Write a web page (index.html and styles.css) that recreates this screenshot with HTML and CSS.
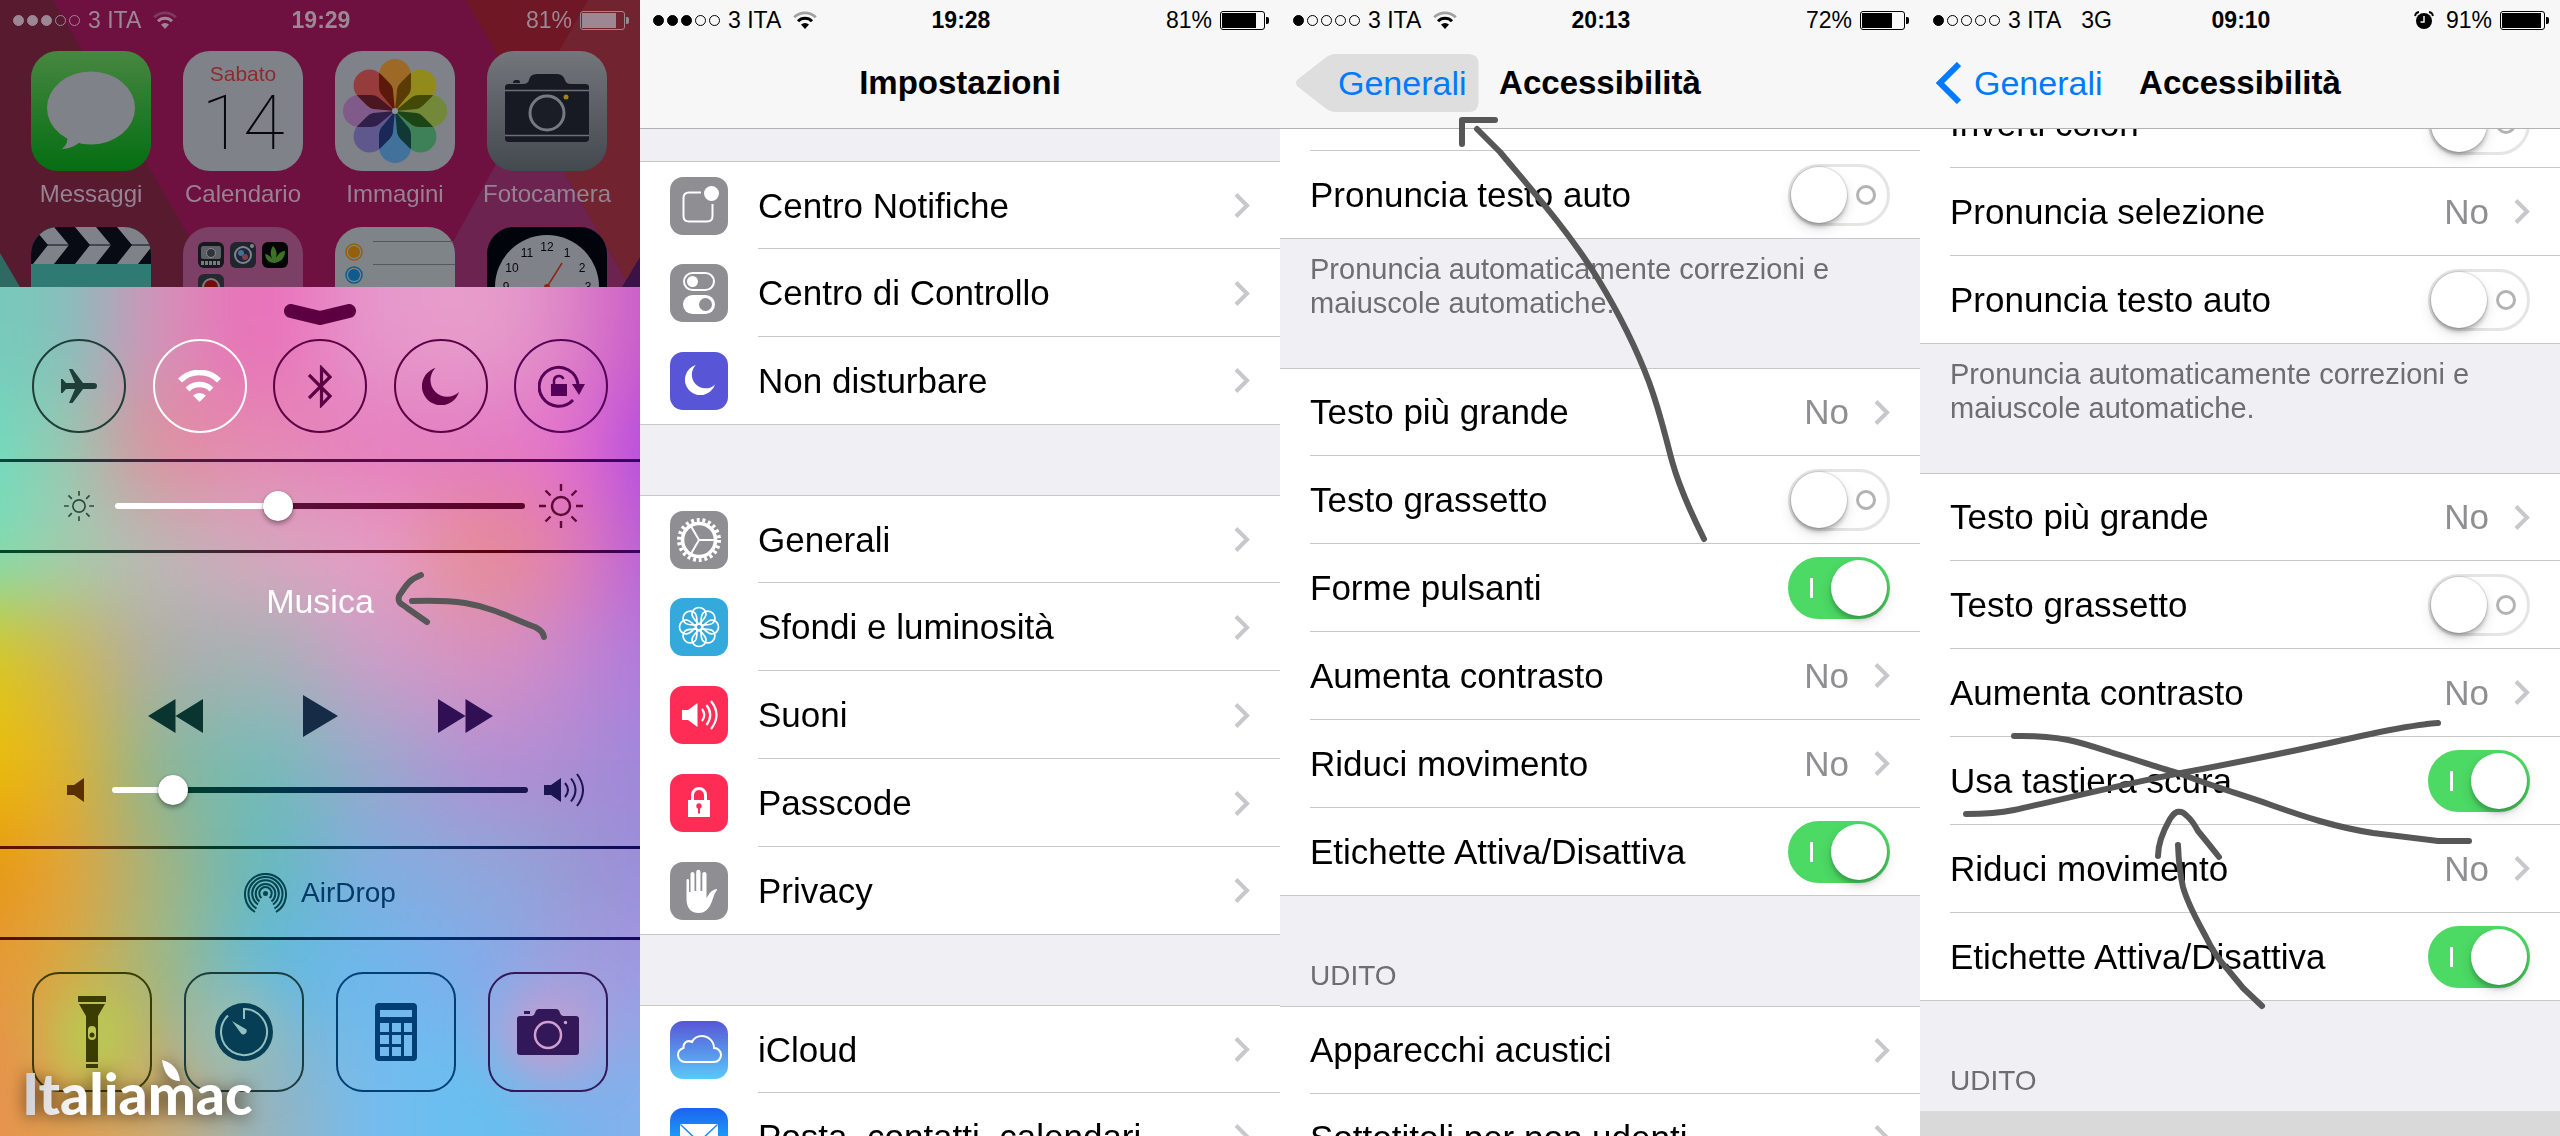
FILE: index.html
```html
<!DOCTYPE html>
<html lang="it">
<head>
    <meta charset="UTF-8" />
    <meta name="viewport" content="width=device-width, initial-scale=1" />
    <title>iOS 7.1 - Italiamac</title>
    <link rel="stylesheet" href="styles.css">
</head>
<body>
    <!-- Shared icons -->
    <svg class="sprite" aria-hidden="true">
        <symbol id="wifi" viewBox="0 0 24 18">
            <path d="M12 18 L8 13.600 A6 6 0 0 1 16 13.600 Z" fill="currentColor"/>
            <path d="M5 10.300 A9.800 9.800 0 0 1 19 10.300" fill="none" stroke="currentColor" stroke-width="3"/>
            <path d="M1.200 6.200 A15.400 15.400 0 0 1 22.800 6.200" fill="none" stroke="currentColor" stroke-width="2.800" opacity=".35"/>
        </symbol>
        <symbol id="chevron" viewBox="0 0 16 25">
            <path d="M2 1.500 L13 12.500 L2 23.500" fill="none" stroke="currentColor" stroke-width="4"/>
        </symbol>
        <symbol id="moon" viewBox="0 0 37 37">
            <path d="M13.500 0 A19 19 0 1 0 37 24 A16.500 16.500 0 0 1 13.500 0 Z" fill="currentColor"/>
        </symbol>
        <symbol id="speaker" viewBox="0 0 17 24">
            <path d="M0 7 H7 L17 0 V24 L7 17 H0 Z" fill="currentColor"/>
        </symbol>
        <symbol id="speaker-loud" viewBox="0 0 40 34">
            <path d="M0 12 H7 L17 5 V29 L7 22 H0 Z" fill="currentColor"/>
            <g fill="none" stroke="currentColor" stroke-width="2">
                <path d="M21 10 Q27 17 21 24"/>
                <path d="M27 5.500 Q36 17 27 28.500"/>
                <path d="M33 1 Q45 17 33 33"/>
            </g>
        </symbol>
        <symbol id="sun" viewBox="0 0 44 44">
            <g fill="none" stroke="currentColor" stroke-width="2.400">
                <circle cx="22" cy="22" r="9"/>
                <path d="M22 0 V7 M22 37 V44 M0 22 H7 M37 22 H44 M6.500 6.500 L11.500 11.500 M32.500 32.500 L37.500 37.500 M6.500 37.500 L11.500 32.500 M32.500 11.500 L37.500 6.500"/>
            </g>
        </symbol>
    </svg>

    <div class="phones">
        <!-- Control Center -->
        <section class="phone">
            <div class="home">
                <svg class="wallpaper" viewBox="0 0 640 287" preserveAspectRatio="none" aria-hidden="true">
                    <rect width="640" height="287" fill="#6f1140"/>
                    <path d="M0 0 H53 L218 287 H0 Z" fill="#581a2f"/>
                    <path d="M0 253 L20 287 H0 Z" fill="#2f6a62"/>
                    <path d="M466 0 H588 L530 110 Z" fill="#701725"/>
                    <path d="M588 0 H640 V287 H630 L527 108 Z" fill="#71232f"/>
                    <path d="M527 108 L428 287 H630 Z" fill="#6c2350"/>
                    <path d="M640 257 L622 287 H640 Z" fill="#3a1248"/>
                </svg>
                <div class="status dimmed">
                    <div class="status-left">
                        <span class="dots"><i class="on"></i><i class="on"></i><i class="on"></i><i></i><i></i></span>
                        <span>3 ITA</span>
                        <svg class="wifi"><use href="#wifi"/></svg>
                    </div>
                    <b>19:29</b>
                    <div class="status-right">
                        <span>81%</span>
                        <span class="battery"><span style="width: 83%"></span></span>
                    </div>
                </div>
                <div class="apps">
                    <a class="app" href="#">
                        <svg viewBox="0 0 120 120">
                            <defs><linearGradient id="msg" x2="0" y2="1"><stop stop-color="#478740"/><stop offset="1" stop-color="#046e12"/></linearGradient></defs>
                            <rect width="120" height="120" rx="27" fill="url(#msg)"/>
                            <ellipse cx="60" cy="57" rx="44" ry="36.500" fill="#7f8389"/>
                            <path d="M36 84 Q38 92 31 98 Q41 98 49 91 Z" fill="#7f8389"/>
                        </svg>
                        <span>Messaggi</span>
                    </a>
                    <a class="app" href="#">
                        <span class="calendar"><span class="day">Sabato</span><span class="date">14</span></span>
                        <span>Calendario</span>
                    </a>
                    <a class="app" href="#">
                        <svg class="photos" viewBox="0 0 120 120">
                            <defs><path id="petal" d="M0 0 L-14 -17 Q-16 -20 -16 -24 V-36 A16 16 0 0 1 16 -36 V-24 Q16 -20 14 -17 Z"/></defs>
                            <rect width="120" height="120" rx="27" fill="#7f8389"/>
                            <g transform="translate(60 60)">
                                <use href="#petal" fill="#9c6a26"/>
                                <use href="#petal" fill="#938a1c" transform="rotate(45)"/>
                                <use href="#petal" fill="#738838" transform="rotate(90)"/>
                                <use href="#petal" fill="#3e8058" transform="rotate(135)"/>
                                <use href="#petal" fill="#42729c" transform="rotate(180)"/>
                                <use href="#petal" fill="#5f588c" transform="rotate(225)"/>
                                <use href="#petal" fill="#805a88" transform="rotate(270)"/>
                                <use href="#petal" fill="#963c3c" transform="rotate(315)"/>
                            </g>
                            <circle cx="60" cy="60" r="3" fill="#8f9398"/>
                        </svg>
                        <span>Immagini</span>
                    </a>
                    <a class="app" href="#">
                        <svg viewBox="0 0 120 120">
                            <defs><linearGradient id="cam" x2="0" y2="1"><stop stop-color="#73767b"/><stop offset="1" stop-color="#444950"/></linearGradient></defs>
                            <rect width="120" height="120" rx="27" fill="url(#cam)"/>
                            <path d="M18 36 Q18 33 22 33 H36 Q41 33 42 29 Q43 23 50 23 H70 Q76 23 78 29 Q79 33 84 33 H98 Q102 33 102 36 V88 Q102 91 98 91 H22 Q18 91 18 88 Z M26 32 Q26 29 29 29 H31 Q33 29 33 32 Z" fill="#171a22"/>
                            <path d="M18 39.500 H102 M18 84.500 H102" stroke="#6c7076" stroke-width="1.500"/>
                            <circle cx="60" cy="62" r="17" fill="#1a1d26" stroke="#757a80" stroke-width="3"/>
                            <circle cx="79" cy="46" r="2.500" fill="#a08510"/>
                        </svg>
                        <span>Fotocamera</span>
                    </a>
                    <a class="app" href="#" aria-label="iMovie">
                        <svg viewBox="0 0 120 120">
                            <defs><clipPath id="round"><rect width="120" height="120" rx="27"/></clipPath></defs>
                            <g clip-path="url(#round)">
                                <rect width="120" height="120" fill="#2f7a72"/>
                                <rect width="120" height="37" fill="#080b14"/>
                                <path d="M-39 0 h21 l15 18 l-15 19 h-21 l15 -19 Z M2 0 h21 l15 18 l-15 19 h-21 l15 -19 Z M44 0 h21 l15 18 l-15 19 h-21 l15 -19 Z M86 0 h21 l15 18 l-15 19 h-21 l15 -19 Z" fill="#7f8389"/>
                                <path d="M0 18 H120" stroke="#080b14"/>
                            </g>
                        </svg>
                    </a>
                    <a class="app" href="#" aria-label="Cartella Foto">
                        <svg viewBox="0 0 120 120">
                            <rect width="120" height="120" rx="27" fill="#7c3f66"/>
                            <rect x="15" y="15" width="26" height="26" rx="6" fill="#15181d"/>
                            <rect x="18" y="19" width="20" height="13" rx="2" fill="#5c6066"/>
                            <circle cx="28" cy="26" r="4.500" fill="#30343a" stroke="#85898e"/>
                            <path d="M18 36 H38" stroke="#777b80" stroke-width="4" stroke-dasharray="3 1"/>
                            <rect x="47" y="15" width="26" height="26" rx="6" fill="#20252e"/>
                            <circle cx="60" cy="28" r="8" fill="#20253f" stroke="#80848a" stroke-width="2"/>
                            <circle cx="58" cy="26" r="3" fill="#457090"/>
                            <circle cx="62" cy="30" r="3" fill="#80404a"/>
                            <circle cx="69" cy="19" r="2" fill="#80848a"/>
                            <rect x="79" y="15" width="26" height="26" rx="6" fill="#030604"/>
                            <path d="M92 36 Q83 36 82 27 Q87 28 89 32 Q86 24 90 19 Q95 24 93 31 Q97 24 102 24 Q102 34 92 36 Z" fill="#3f7028"/>
                            <rect x="15" y="47" width="26" height="26" rx="6" fill="#24282f"/>
                            <circle cx="28" cy="60" r="8" fill="#750c0c" stroke="#777b80" stroke-width="2"/>
                        </svg>
                    </a>
                    <a class="app" href="#" aria-label="Promemoria">
                        <svg viewBox="0 0 120 120">
                            <rect width="120" height="120" rx="27" fill="#7f8489"/>
                            <path d="M38 14.500 H118 M38 37.500 H120" stroke="#54585e"/>
                            <g stroke-width="1.500" fill="none">
                                <circle cx="19" cy="25" r="8" stroke="#94600c"/>
                                <circle cx="19" cy="48" r="8" stroke="#0f5c8c"/>
                            </g>
                            <circle cx="19" cy="25" r="6" fill="#94600c"/>
                            <circle cx="19" cy="48" r="6" fill="#0f5c8c"/>
                        </svg>
                    </a>
                    <a class="app" href="#" aria-label="Orologio">
                        <svg class="clock" viewBox="0 0 120 120">
                            <rect width="120" height="120" rx="27" fill="#02040b"/>
                            <circle cx="60" cy="60" r="52" fill="#7f8389"/>
                            <g text-anchor="middle">
                                <text x="60" y="24">12</text>
                                <text x="80" y="30">1</text>
                                <text x="95" y="45">2</text>
                                <text x="101" y="64">3</text>
                                <text x="19" y="64">9</text>
                                <text x="25" y="45">10</text>
                                <text x="40" y="30">11</text>
                            </g>
                            <path d="M60 60 L75 36" stroke="#8c2418" stroke-width="1.500"/>
                            <circle cx="60" cy="60" r="3" fill="#8c2418"/>
                        </svg>
                    </a>
                </div>
            </div>

            <div class="control-center">
                <svg class="backdrop" viewBox="0 0 640 848" preserveAspectRatio="none" aria-hidden="true">
                    <defs>
                        <filter id="soft" x="-20%" y="-20%" width="140%" height="140%" color-interpolation-filters="sRGB"><feGaussianBlur stdDeviation="42"/></filter>
                        <filter id="glow" x="-100%" y="-100%" width="300%" height="300%" color-interpolation-filters="sRGB"><feGaussianBlur stdDeviation="26"/></filter>
                    </defs>
                    <g filter="url(#soft)">
                        <path d="M-160 -160 H20 V106 H-160 Z" fill="#76ccba"/>
                        <path d="M20 -160 H110 V106 H20 Z" fill="#80c2bc"/>
                        <path d="M110 -160 H210 V106 H110 Z" fill="#d890b8"/>
                        <path d="M210 -160 H320 V106 H210 Z" fill="#ea6eb9"/>
                        <path d="M320 -160 H430 V106 H320 Z" fill="#e698cc"/>
                        <path d="M430 -160 H540 V106 H430 Z" fill="#e79ecb"/>
                        <path d="M540 -160 H620 V106 H540 Z" fill="#dc80c4"/>
                        <path d="M620 -160 H800 V106 H620 Z" fill="#c452cc"/>

                        <path d="M-160 106 H20 V212 H-160 Z" fill="#66dfc2"/>
                        <path d="M20 106 H110 V212 H20 Z" fill="#96ccb0"/>
                        <path d="M110 106 H210 V212 H110 Z" fill="#e48c9c"/>
                        <path d="M210 106 H320 V212 H210 Z" fill="#e58ab4"/>
                        <path d="M320 106 H430 V212 H320 Z" fill="#e67ebf"/>
                        <path d="M430 106 H540 V212 H430 Z" fill="#e47cc4"/>
                        <path d="M540 106 H620 V212 H540 Z" fill="#e66cd0"/>
                        <path d="M620 106 H800 V212 H620 Z" fill="#a644e4"/>

                        <path d="M-160 212 H20 V318 H-160 Z" fill="#74e0b8"/>
                        <path d="M20 212 H110 V318 H20 Z" fill="#a0ceb0"/>
                        <path d="M110 212 H210 V318 H110 Z" fill="#bcb8b6"/>
                        <path d="M210 212 H320 V318 H210 Z" fill="#d8a6be"/>
                        <path d="M320 212 H430 V318 H320 Z" fill="#e79cc4"/>
                        <path d="M430 212 H540 V318 H430 Z" fill="#e68c90"/>
                        <path d="M540 212 H620 V318 H540 Z" fill="#e27cb8"/>
                        <path d="M620 212 H800 V318 H620 Z" fill="#b058e0"/>

                        <path d="M-160 318 H20 V424 H-160 Z" fill="#dccc10"/>
                        <path d="M20 318 H110 V424 H20 Z" fill="#d0b650"/>
                        <path d="M110 318 H210 V424 H110 Z" fill="#acacaa"/>
                        <path d="M210 318 H320 V424 H210 Z" fill="#a4b2b4"/>
                        <path d="M320 318 H430 V424 H320 Z" fill="#cc9cc8"/>
                        <path d="M430 318 H540 V424 H430 Z" fill="#d890c0"/>
                        <path d="M540 318 H620 V424 H540 Z" fill="#c284d2"/>
                        <path d="M620 318 H800 V424 H620 Z" fill="#a878dc"/>

                        <path d="M-160 424 H20 V530 H-160 Z" fill="#ecc000"/>
                        <path d="M20 424 H110 V530 H20 Z" fill="#e4b228"/>
                        <path d="M110 424 H210 V530 H110 Z" fill="#86b69c"/>
                        <path d="M210 424 H320 V530 H210 Z" fill="#74bcb8"/>
                        <path d="M320 424 H430 V530 H320 Z" fill="#9aa8cc"/>
                        <path d="M430 424 H540 V530 H430 Z" fill="#b48ed4"/>
                        <path d="M540 424 H620 V530 H540 Z" fill="#aa8cd2"/>
                        <path d="M620 424 H800 V530 H620 Z" fill="#9c86de"/>

                        <path d="M-160 530 H20 V636 H-160 Z" fill="#e69408"/>
                        <path d="M20 530 H110 V636 H20 Z" fill="#e8a238"/>
                        <path d="M110 530 H210 V636 H110 Z" fill="#a4b480"/>
                        <path d="M210 530 H320 V636 H210 Z" fill="#62bac0"/>
                        <path d="M320 530 H430 V636 H320 Z" fill="#82aee2"/>
                        <path d="M430 530 H540 V636 H430 Z" fill="#8ea8da"/>
                        <path d="M540 530 H620 V636 H540 Z" fill="#9898d2"/>
                        <path d="M620 530 H800 V636 H620 Z" fill="#9c8cdc"/>

                        <path d="M-160 636 H20 V742 H-160 Z" fill="#e8943c"/>
                        <path d="M20 636 H110 V742 H20 Z" fill="#daaa40"/>
                        <path d="M110 636 H210 V742 H110 Z" fill="#9eba84"/>
                        <path d="M210 636 H320 V742 H210 Z" fill="#64bbe0"/>
                        <path d="M320 636 H430 V742 H320 Z" fill="#6cb8ee"/>
                        <path d="M430 636 H540 V742 H430 Z" fill="#84acec"/>
                        <path d="M540 636 H620 V742 H540 Z" fill="#a89cdc"/>
                        <path d="M620 636 H800 V742 H620 Z" fill="#9c9ae4"/>

                        <path d="M-160 742 H20 V1008 H-160 Z" fill="#e8904c"/>
                        <path d="M20 742 H110 V1008 H20 Z" fill="#e09e50"/>
                        <path d="M110 742 H210 V1008 H110 Z" fill="#ccaa70"/>
                        <path d="M210 742 H320 V1008 H210 Z" fill="#94b4c0"/>
                        <path d="M320 742 H430 V1008 H320 Z" fill="#74bcf0"/>
                        <path d="M430 742 H540 V1008 H430 Z" fill="#66c0f0"/>
                        <path d="M540 742 H620 V1008 H540 Z" fill="#7cb2ec"/>
                        <path d="M620 742 H800 V1008 H620 Z" fill="#88b0ec"/>
                    </g>
                    <ellipse cx="94" cy="750" rx="38" ry="48" fill="#b4cf50" filter="url(#glow)"/>
                    <ellipse cx="548" cy="746" rx="46" ry="42" fill="#cc9acc" filter="url(#glow)"/>
                    <ellipse cx="236" cy="745" rx="36" ry="40" fill="#9cc0b0" filter="url(#glow)"/>
                </svg>

                <div class="toggles-section">
                    <svg class="grabber" viewBox="0 0 72 21" aria-hidden="true"><path d="M7 7 L36 14 L65 7" fill="none" stroke="#5c0042" stroke-width="14" stroke-linecap="round"/></svg>
                    <div class="toggles">
                        <button class="toggle teal" aria-label="Uso in aereo">
                            <svg width="36" height="34" viewBox="0 0 36 34"><path d="M14 14 L8 0 H11.500 L22 14 H33 A3 3 0 0 1 33 20 H22 L11.500 34 H8 L14 20 H5 L1.500 24 H0 V10 H1.500 L5 14 Z" fill="currentColor"/></svg>
                        </button>
                        <button class="toggle active" aria-label="Wi-Fi">
                            <svg width="43" height="32" viewBox="0 0 43 32"><path d="M21.500 32 L15 25.500 A9.500 9.500 0 0 1 28 25.500 Z" fill="currentColor"/><path d="M9.500 19.500 A17 17 0 0 1 33.500 19.500 M2 10.500 A27.500 27.500 0 0 1 41 10.500" fill="none" stroke="currentColor" stroke-width="5.500"/></svg>
                        </button>
                        <button class="toggle plum" aria-label="Bluetooth">
                            <svg width="24" height="43" viewBox="0 0 24 43"><path d="M1 10 L22 31 L13.500 40 V3 L22 12 L1 33" fill="none" stroke="currentColor" stroke-width="3.200"/></svg>
                        </button>
                        <button class="toggle plum" aria-label="Non disturbare">
                            <svg width="37" height="37"><use href="#moon"/></svg>
                        </button>
                        <button class="toggle violet" aria-label="Blocco rotazione">
                            <svg width="47" height="43" viewBox="0 0 47 43"><path d="M35 35 A19.500 19.500 0 1 1 40 19" fill="none" stroke="currentColor" stroke-width="3"/><path d="M34 19 H47 L41 30 Z" fill="currentColor"/><path d="M13 19 H29 V31 H13 Z" fill="currentColor"/><path d="M16 20 V15 A5 5 0 0 1 25.500 14" fill="none" stroke="currentColor" stroke-width="2.500"/></svg>
                        </button>
                    </div>
                </div>
                <hr class="rule rule-1">
                <div class="brightness">
                    <svg class="sun-small"><use href="#sun"/></svg>
                    <input class="slider" type="range" value="39" aria-label="Luminosità" style="--value: 39%">
                    <svg class="sun-large"><use href="#sun"/></svg>
                </div>
                <hr class="rule rule-2">
                <div class="media">
                    <span class="track">Musica</span>
                    <div class="transport">
                        <button class="forest" aria-label="Indietro"><svg width="55" height="34" viewBox="0 0 55 34"><path d="M0 17 L27.500 0 V34 Z M27.500 17 L55 0 V34 Z" fill="currentColor"/></svg></button>
                        <button class="navy" aria-label="Riproduci"><svg width="35" height="42" viewBox="0 0 35 42"><path d="M0 0 L35 21 L0 42 Z" fill="currentColor"/></svg></button>
                        <button class="indigo" aria-label="Avanti"><svg width="55" height="34" viewBox="0 0 55 34"><path d="M0 0 L27.500 17 L0 34 Z M27.500 0 L55 17 L27.500 34 Z" fill="currentColor"/></svg></button>
                    </div>
                    <div class="volume">
                        <svg class="volume-min"><use href="#speaker"/></svg>
                        <input class="slider" type="range" value="12" aria-label="Volume" style="--value: 14%">
                        <svg class="volume-max"><use href="#speaker-loud"/></svg>
                    </div>
                </div>
                <hr class="rule rule-3">
                <button class="airdrop">
                    <svg width="43" height="40" viewBox="0 0 43 40">
                        <g fill="none" stroke="#004450" stroke-width="2">
                            <path d="M11 39 A20.500 20.500 0 1 1 32 39"/>
                            <path d="M12.500 35.500 A17 17 0 1 1 30.500 35.500"/>
                            <path d="M14 31.500 A13.300 13.300 0 1 1 29 31.500"/>
                            <path d="M15.500 28.500 A9.800 9.800 0 1 1 27.500 28.500"/>
                            <path d="M17.500 25 A6.200 6.200 0 1 1 25.500 25"/>
                        </g>
                        <circle cx="21.500" cy="20.500" r="2.500" fill="#004450"/>
                    </svg>
                    AirDrop
                </button>
                <hr class="rule rule-4">
                <div class="shortcuts">
                    <button class="shortcut olive" aria-label="Torcia">
                        <svg width="28" height="72" viewBox="0 0 28 72"><path fill-rule="evenodd" d="M0 0 H28 V6 H0 Z M1 8 H27 L20 20 V66 H8 V20 Z M14 30 A4 4 0 0 0 10 34 V40 A4 4 0 0 0 18 40 V34 A4 4 0 0 0 14 30 Z M8 68 H20 V72 H8 Z" fill="currentColor"/><circle cx="14" cy="39" r="2.500" fill="currentColor"/></svg>
                    </button>
                    <button class="shortcut sea" aria-label="Timer">
                        <svg width="58" height="58" viewBox="0 0 58 58"><circle cx="29" cy="29" r="29" fill="#063f55"/><path d="M29 16 V6 A23 23 0 1 1 13 12.500" fill="none" stroke="#94c0c0" stroke-width="2"/><path d="M17 18 L31.500 26.500 A3.600 3.600 0 0 1 26.500 31 Z" fill="#94c0c0"/></svg>
                    </button>
                    <button class="shortcut blue" aria-label="Calcolatrice">
                        <svg width="42" height="58" viewBox="0 0 42 58"><path fill-rule="evenodd" d="M4 0 H38 Q42 0 42 4 V54 Q42 58 38 58 H4 Q0 58 0 54 V4 Q0 0 4 0 Z M5 7 V14 H37 V7 Z M5 20 V29 H14 V20 Z M17 20 V29 H26 V20 Z M29 20 V29 H37 V20 Z M5 32 V41 H14 V32 Z M17 32 V41 H26 V32 Z M29 32 V53 H37 V32 Z M5 44 V53 H14 V44 Z M17 44 V53 H26 V44 Z" fill="currentColor"/></svg>
                    </button>
                    <button class="shortcut purple" aria-label="Fotocamera">
                        <svg width="62" height="46" viewBox="0 0 62 46"><path d="M7 2 H13 V5 H7 Z M3 7 H15 Q17 7 18 4 Q19 0 22 0 H39 Q42 0 43 4 Q44 7 46 7 H59 Q62 7 62 10 V43 Q62 46 59 46 H3 Q0 46 0 43 V10 Q0 7 3 7 Z" fill="currentColor"/><circle cx="31" cy="26" r="13" fill="none" stroke="#d0a0d0" stroke-width="2.500"/><circle cx="48.500" cy="13.500" r="1.700" fill="#d0a0d0"/></svg>
                    </button>
                </div>
            </div>

            <div class="brand">
                <svg width="18" height="22" viewBox="0 0 18 22" aria-hidden="true"><path d="M0 0 Q16 4 18 21 Q3 21 0 0 Z" fill="#fff"/></svg>
                <span>Italiamac</span>
            </div>
            <svg class="marks" viewBox="0 0 640 1136" preserveAspectRatio="xMidYMin meet" aria-hidden="true">
                <path d="M421 575 C411 579 408 582 399 596 C397 604 403 604 407 608 L427 622"/>
                <path d="M412 601 Q445 600 465 603 C495 608 515 620 535 627 Q543 631 544 637"/>
            </svg>
        </section>

        <!-- Impostazioni -->
        <section class="phone">
            <header class="bar">
                <div class="status">
                    <div class="status-left">
                        <span class="dots"><i class="on"></i><i class="on"></i><i class="on"></i><i></i><i></i></span>
                        <span>3 ITA</span>
                        <svg class="wifi"><use href="#wifi"/></svg>
                    </div>
                    <b>19:28</b>
                    <div class="status-right">
                        <span>81%</span>
                        <span class="battery"><span style="width: 83%"></span></span>
                    </div>
                </div>
                <div class="nav"><h1>Impostazioni</h1></div>
            </header>
            <main class="content settings">
                <ul class="group">
                    <li><a class="row" href="#">
                        <svg class="icon gray" viewBox="0 0 58 58"><path d="M31 15.500 H19 Q13.500 15.500 13.500 21 V39 Q13.500 44.500 19 44.500 H37 Q42.500 44.500 42.500 39 V27" fill="none" stroke="#fff" stroke-width="2"/><circle cx="41.500" cy="16.500" r="7.500" fill="#fff"/></svg>
                        <span>Centro Notifiche</span><svg class="chevron"><use href="#chevron"/></svg></a></li>
                    <li><a class="row" href="#">
                        <svg class="icon gray" viewBox="0 0 58 58"><rect x="14" y="9" width="30" height="17" rx="8.500" fill="none" stroke="#fff" stroke-width="2"/><circle cx="22.500" cy="17.500" r="5.500" fill="#fff"/><rect x="13" y="31" width="32" height="19" rx="9.500" fill="#fff"/><circle cx="35.500" cy="40.500" r="6.500" fill="#8e8e93"/></svg>
                        <span>Centro di Controllo</span><svg class="chevron"><use href="#chevron"/></svg></a></li>
                    <li><a class="row" href="#">
                        <svg class="icon indigo-bg" viewBox="0 0 58 58"><use href="#moon" x="15" y="13" width="30" height="30" color="#fff"/></svg>
                        <span>Non disturbare</span><svg class="chevron"><use href="#chevron"/></svg></a></li>
                </ul>
                <ul class="group">
                    <li><a class="row" href="#">
                        <svg class="icon gray" viewBox="0 0 58 58"><g fill="none" stroke="#fff"><circle cx="29" cy="29" r="20" stroke-width="4" stroke-dasharray="2.900 2.812"/><circle cx="29" cy="29" r="16.500" stroke-width="3.600"/><path d="M29 29 H45 M29 29 L21 15.200 M29 29 L21 42.800" stroke-width="2"/></g></svg>
                        <span>Generali</span><svg class="chevron"><use href="#chevron"/></svg></a></li>
                    <li><a class="row" href="#">
                        <svg class="icon sky" viewBox="0 0 58 58">
                            <defs><path id="leaf" d="M0 -3 C-3 -6 -7 -9 -7 -13 A7 6.500 0 0 1 7 -13 C7 -9 3 -6 0 -3 Z"/></defs>
                            <g transform="translate(29 29)" fill="none" stroke="#fff" stroke-width="1.700">
                                <use href="#leaf"/><use href="#leaf" transform="rotate(45)"/><use href="#leaf" transform="rotate(90)"/><use href="#leaf" transform="rotate(135)"/><use href="#leaf" transform="rotate(180)"/><use href="#leaf" transform="rotate(225)"/><use href="#leaf" transform="rotate(270)"/><use href="#leaf" transform="rotate(315)"/>
                                <circle r="3.200"/>
                            </g>
                        </svg>
                        <span>Sfondi e luminosità</span><svg class="chevron"><use href="#chevron"/></svg></a></li>
                    <li><a class="row" href="#">
                        <svg class="icon red" viewBox="0 0 58 58"><path d="M12 24 H18 L27.500 17 V41 L18 34 H12 Z" fill="#fff"/><path d="M32 23 Q36.500 29 32 35 M36.500 19 Q44 29 36.500 39 M41 15 Q52 29 41 43" fill="none" stroke="#fff" stroke-width="2.200"/></svg>
                        <span>Suoni</span><svg class="chevron"><use href="#chevron"/></svg></a></li>
                    <li><a class="row" href="#">
                        <svg class="icon red" viewBox="0 0 58 58"><path d="M18 26 H40 V43 H18 Z" fill="#fff"/><path d="M22.500 27 V21 A6.500 6.500 0 0 1 35.500 21 V27" fill="none" stroke="#fff" stroke-width="3"/><circle cx="29" cy="32" r="2.700" fill="#ff2d55"/><path d="M29 32 V39.500" stroke="#ff2d55" stroke-width="2"/></svg>
                        <span>Passcode</span><svg class="chevron"><use href="#chevron"/></svg></a></li>
                    <li><a class="row" href="#">
                        <svg class="icon gray" viewBox="0 0 58 58"><path d="M16.500 18 A1.300 1.300 0 0 1 19 18 V30 H20.500 V12 A1.700 1.700 0 0 1 24.500 12 V29 H26.200 V10 A1.700 1.700 0 0 1 30.500 10 V29 H32.300 V12 A1.700 1.700 0 0 1 36.500 12 V36 C39 33 40 28 47 27 C47.500 28 46 29 45 31 C42 38 40 51 29 51 C20 51 16.500 45 16.500 37 Z" fill="#fff"/></svg>
                        <span>Privacy</span><svg class="chevron"><use href="#chevron"/></svg></a></li>
                </ul>
                <ul class="group">
                    <li><a class="row" href="#">
                        <svg class="icon cloud" viewBox="0 0 58 58"><path d="M15 41 H44 A7 7 0 0 0 44 27 C44 20 38 15 32 15 C27 15 23.500 18 22 21 C17 18.500 13 22 13.500 27 C10 28 8 31 8 34 A7 7 0 0 0 15 41 Z" fill="none" stroke="#fff" stroke-width="2"/></svg>
                        <span>iCloud</span><svg class="chevron"><use href="#chevron"/></svg></a></li>
                    <li><a class="row" href="#">
                        <svg class="icon mail" viewBox="0 0 58 58"><rect x="10" y="16" width="38" height="26" rx="2" fill="#fff"/><path d="M11 17 L29 34 L47 17" fill="none" stroke="#1c8af5" stroke-width="1.500"/></svg>
                        <span>Posta, contatti, calendari</span><svg class="chevron"><use href="#chevron"/></svg></a></li>
                </ul>
            </main>
        </section>

        <!-- Forme pulsanti -->
        <section class="phone">
            <header class="bar">
                <div class="status">
                    <div class="status-left">
                        <span class="dots"><i class="on"></i><i></i><i></i><i></i><i></i></span>
                        <span>3 ITA</span>
                        <svg class="wifi"><use href="#wifi"/></svg>
                    </div>
                    <b>20:13</b>
                    <div class="status-right">
                        <span>72%</span>
                        <span class="battery"><span style="width: 73%"></span></span>
                    </div>
                </div>
                <div class="nav">
                    <button class="back shaped">
                        <svg viewBox="0 0 182 58" preserveAspectRatio="none" aria-hidden="true"><path d="M1 26 L29 4 Q34 0 40 0 H172 Q182 0 182 10 V48 Q182 58 172 58 H40 Q34 58 29 54 L1 32 Q-1 29 1 26 Z" fill="#dedede"/></svg>
                        <span>Generali</span>
                    </button>
                    <h1>Accessibilità</h1>
                </div>
            </header>
            <main class="content">
                <ul class="group">
                    <li class="cut"></li>
                    <li><label class="row"><span>Pronuncia testo auto</span><input class="switch" type="checkbox"></label></li>
                </ul>
                <p class="note">Pronuncia automaticamente correzioni e maiuscole automatiche.</p>
                <ul class="group">
                    <li><a class="row" href="#"><span>Testo più grande</span><span class="value">No</span><svg class="chevron"><use href="#chevron"/></svg></a></li>
                    <li><label class="row"><span>Testo grassetto</span><input class="switch" type="checkbox"></label></li>
                    <li><label class="row"><span>Forme pulsanti</span><input class="switch" type="checkbox" checked></label></li>
                    <li><a class="row" href="#"><span>Aumenta contrasto</span><span class="value">No</span><svg class="chevron"><use href="#chevron"/></svg></a></li>
                    <li><a class="row" href="#"><span>Riduci movimento</span><span class="value">No</span><svg class="chevron"><use href="#chevron"/></svg></a></li>
                    <li><label class="row"><span>Etichette Attiva/Disattiva</span><input class="switch" type="checkbox" checked></label></li>
                </ul>
                <h2 class="heading">UDITO</h2>
                <ul class="group">
                    <li><a class="row" href="#"><span>Apparecchi acustici</span><svg class="chevron"><use href="#chevron"/></svg></a></li>
                    <li><a class="row" href="#"><span>Sottotitoli per non udenti</span><svg class="chevron"><use href="#chevron"/></svg></a></li>
                </ul>
            </main>
            <svg class="marks" viewBox="0 0 640 1136" preserveAspectRatio="xMidYMin meet" aria-hidden="true">
                <path d="M215 120 H182 V144"/>
                <path d="M197 129 L220 152 C250 188 290 233 318 279 C338 312 357 350 369 382 C380 412 385 435 392 461 C400 490 412 515 424 539"/>
            </svg>
        </section>

        <!-- Tastiera scura -->
        <section class="phone ended">
            <header class="bar">
                <div class="status">
                    <div class="status-left">
                        <span class="dots"><i class="on"></i><i></i><i></i><i></i><i></i></span>
                        <span>3 ITA</span>
                        <span class="network">3G</span>
                    </div>
                    <b>09:10</b>
                    <div class="status-right">
                        <svg class="alarm" width="20" height="18" viewBox="0 0 20 18" aria-hidden="true"><circle cx="10" cy="10" r="8" fill="#000"/><path d="M10 5 V11 H6.500" fill="none" stroke="#f7f7f7" stroke-width="1.500"/><path d="M1 5 Q1.500 1.500 5 1 M19 5 Q18.500 1.500 15 1" fill="none" stroke="#000" stroke-width="1.800"/></svg>
                        <span>91%</span>
                        <span class="battery"><span style="width: 94%"></span></span>
                    </div>
                </div>
                <div class="nav">
                    <button class="back">
                        <svg width="25" height="42" viewBox="0 0 25 42" aria-hidden="true"><path d="M23 2 L4 21 L23 40" fill="none" stroke="#007aff" stroke-width="6"/></svg>
                        <span>Generali</span>
                    </button>
                    <h1>Accessibilità</h1>
                </div>
            </header>
            <main class="content scrolled">
                <ul class="group">
                    <li><label class="row"><span>Inverti colori</span><input class="switch" type="checkbox"></label></li>
                    <li><a class="row" href="#"><span>Pronuncia selezione</span><span class="value">No</span><svg class="chevron"><use href="#chevron"/></svg></a></li>
                    <li><label class="row"><span>Pronuncia testo auto</span><input class="switch" type="checkbox"></label></li>
                </ul>
                <p class="note">Pronuncia automaticamente correzioni e maiuscole automatiche.</p>
                <ul class="group">
                    <li><a class="row" href="#"><span>Testo più grande</span><span class="value">No</span><svg class="chevron"><use href="#chevron"/></svg></a></li>
                    <li><label class="row"><span>Testo grassetto</span><input class="switch" type="checkbox"></label></li>
                    <li><a class="row" href="#"><span>Aumenta contrasto</span><span class="value">No</span><svg class="chevron"><use href="#chevron"/></svg></a></li>
                    <li><label class="row"><span>Usa tastiera scura</span><input class="switch" type="checkbox" checked></label></li>
                    <li><a class="row" href="#"><span>Riduci movimento</span><span class="value">No</span><svg class="chevron"><use href="#chevron"/></svg></a></li>
                    <li><label class="row"><span>Etichette Attiva/Disattiva</span><input class="switch" type="checkbox" checked></label></li>
                </ul>
                <h2 class="heading">UDITO</h2>
            </main>
            <svg class="marks" viewBox="0 0 640 1136" preserveAspectRatio="xMidYMin meet" aria-hidden="true">
                <path d="M94 736 C140 735 160 742 190 752 C220 761 240 768 261 774 C300 789 320 794 351 805 C385 817 415 827 453 833 L518 841 H549"/>
                <path d="M46 814 Q75 814 94 810 C140 800 200 785 261 773 C320 762 380 750 441 736 Q490 725 518 723"/>
                <path d="M238 856 Q238 840 250 819 Q258 806 267 816 Q272 820 278 831 Q288 843 299 857"/>
                <path d="M258 845 Q259 870 263 887 C268 905 278 922 286 937 C292 950 298 959 309 971 L323 988 L342 1006"/>
            </svg>
        </section>
    </div>
</body>
</html>
```
FILE: styles.css
```css
*,
*::before,
*::after {
    box-sizing: border-box;
}
body {
    margin: 0;
    font-family: "Liberation Sans", Arial, sans-serif;
    font-size: 34px;
    color: #000;
}
a {
    color: inherit;
    text-decoration: none;
}
button {
    padding: 0;
    border: none;
    background: none;
    color: inherit;
    font: inherit;
    cursor: pointer;
}
svg {
    display: block;
    flex-shrink: 0;
}
.sprite {
    position: absolute;
    width: 0;
    height: 0;
}
.phones {
    display: grid;
    grid-template-columns: repeat(4, 1fr);
    height: 100vh;
}
.phone {
    position: relative;
    display: flex;
    flex-direction: column;
    min-width: 0;
    overflow: hidden;
    background: #efeff4;
}
.phone.ended {
    background: #d9d9d9;
}

/* Status bar */
.status {
    display: grid;
    grid-template-columns: 1fr auto 1fr;
    align-items: center;
    height: 40px;
    padding: 0 11px 0 13px;
    font-size: 23px;
}
.status.dimmed {
    position: relative;
    color: #9c8794;
}
.status-left,
.status-right {
    display: flex;
    align-items: center;
    gap: 8px;
}
.status-right {
    justify-content: flex-end;
}
.dots {
    display: flex;
    gap: 3px;
}
.dots i {
    width: 11px;
    height: 11px;
    border: 1px solid currentColor;
    border-radius: 50%;
}
.dots .on {
    background: currentColor;
}
.wifi {
    width: 24px;
    height: 18px;
    margin-left: 4px;
}
.network {
    margin-left: 12px;
}
.alarm {
    margin-right: 4px;
}
.battery {
    position: relative;
    width: 45px;
    height: 19px;
    margin-right: 4px;
    padding: 1px;
    border: 1px solid currentColor;
    border-radius: 3px;
}
.battery span {
    display: block;
    height: 100%;
    background: currentColor;
}
.battery::after {
    content: "";
    position: absolute;
    top: 5px;
    right: -5px;
    width: 3px;
    height: 7px;
    border-radius: 0 2px 2px 0;
    background: currentColor;
}

/* Navigation bar */
.bar {
    position: relative;
    z-index: 1;
    flex-shrink: 0;
    padding-bottom: 2px;
    background: #f7f7f7;
    border-bottom: 1px solid #b2b2b5;
}
.nav {
    display: grid;
    grid-template-columns: 1fr auto 1fr;
    align-items: center;
    height: 86px;
    padding: 0 16px;
}
.nav h1 {
    grid-column: 2;
    margin: 0;
    font-size: 33px;
    font-weight: bold;
}
.back {
    display: flex;
    align-items: center;
    justify-self: start;
    gap: 13px;
    color: #007aff;
}
.back.shaped {
    position: relative;
    height: 58px;
    padding: 0 12px 0 42px;
}
.back.shaped svg {
    position: absolute;
    inset: 0;
    width: 100%;
    height: 100%;
}
.back span {
    position: relative;
}

/* Settings lists */
.content {
    overflow: hidden;
    background: #efeff4;
}
.settings {
    display: flex;
    flex-direction: column;
    gap: 70px;
    padding-top: 32px;
}
.group {
    margin: 0;
    padding: 0;
    list-style: none;
    background: #fff;
}
.group li {
    display: flex;
    height: 88px;
    padding-left: 30px;
}
.settings .group li {
    padding-left: 0;
}
.group li.cut {
    height: 22px;
    background: linear-gradient(#c8c7cc, #c8c7cc) 30px 100% / 100% 1px no-repeat;
}
.group li:first-child:not(.cut) {
    border-top: 1px solid #c8c7cc;
}
.group li:last-child {
    border-bottom: 1px solid #c8c7cc;
}
.scrolled .group:first-child {
    margin-top: -49px;
}
.row {
    display: flex;
    flex: 1;
    align-items: center;
    min-width: 0;
    padding-right: 30px;
    border-bottom: 1px solid #c8c7cc;
    font-size: 35px;
}
.group li:last-child .row {
    border-bottom: none;
}
.row > span:first-of-type {
    flex: 1;
}
.settings .row {
    border-bottom: none;
    padding-left: 30px;
    gap: 30px;
    background: linear-gradient(#c8c7cc, #c8c7cc) 118px 100% / 100% 1px no-repeat;
}
.settings .group li:last-child .row {
    background: none;
}
.value {
    margin-right: 25px;
    color: #8e8e93;
}
.chevron {
    width: 16px;
    height: 25px;
    color: #c7c7cc;
}
.icon {
    width: 58px;
    height: 58px;
    border-radius: 13px;
}
.gray {
    background: #8e8e93;
}
.indigo-bg {
    background: #5856d6;
}
.sky {
    background: #34aadc;
}
.red {
    background: #ff2d55;
}
.cloud {
    background: linear-gradient(#5856d6, #5ac8fa);
}
.mail {
    background: linear-gradient(#1d62f0, #1ad5fd);
}
.note {
    height: 129px;
    margin: 0;
    padding: 13px 30px 0;
    font-size: 29px;
    line-height: 34px;
    color: #6d6d72;
}
.heading {
    display: flex;
    align-items: flex-end;
    height: 110px;
    margin: 0;
    padding: 0 30px 13px;
    font-size: 28px;
    font-weight: normal;
    line-height: 34px;
    color: #6d6d72;
}
.switch {
    appearance: none;
    position: relative;
    width: 102px;
    height: 62px;
    margin: 0;
    border: 3px solid #e5e5e5;
    border-radius: 31px;
    background: #fff;
}
.switch::before {
    content: "";
    position: absolute;
    top: 0;
    left: 0;
    width: 56px;
    height: 56px;
    border-radius: 50%;
    background: #fff;
    box-shadow: 0 0 1px 1px rgba(0,0,0,0.12), 0 4px 4px rgba(0,0,0,0.2), 0 6px 14px rgba(0,0,0,0.12);
}
.switch::after {
    content: "";
    position: absolute;
    top: 18px;
    right: 11px;
    width: 20px;
    height: 20px;
    border: 3px solid #b3b3b3;
    border-radius: 50%;
}
.switch:checked {
    border-color: #4cd964;
    background: #4cd964;
}
.switch:checked::before {
    left: 40px;
    box-shadow: 0 4px 4px rgba(0,0,0,0.2), 0 6px 14px rgba(0,0,0,0.12);
}
.switch:checked::after {
    left: 19px;
    width: 3px;
    border: none;
    border-radius: 0;
    background: #fff;
}

/* Home screen */
.home {
    position: relative;
    flex-shrink: 0;
    height: 287px;
    overflow: hidden;
}
.wallpaper,
.backdrop {
    position: absolute;
    inset: 0;
    width: 100%;
    height: 100%;
}
.apps {
    position: relative;
    display: grid;
    grid-template-columns: repeat(4, 120px);
    justify-content: space-between;
    row-gap: 19px;
    padding: 11px 33px 0 31px;
}
.app {
    display: flex;
    flex-direction: column;
    align-items: center;
    gap: 9px;
    font-size: 24px;
    line-height: 28px;
    color: #978292;
    white-space: nowrap;
}
.app svg {
    width: 120px;
    height: 120px;
}
.photos g {
    isolation: isolate;
}
.photos g use {
    mix-blend-mode: multiply;
}
.calendar {
    display: flex;
    flex-direction: column;
    align-items: center;
    width: 120px;
    height: 120px;
    padding-top: 12px;
    border-radius: 27px;
    background: #7f8389;
}
.day {
    font-size: 21px;
    line-height: 22px;
    color: #8f2a2c;
}
.date {
    font-family: Roboto, "Liberation Sans", sans-serif;
    font-size: 76px;
    font-weight: 100;
    line-height: 76px;
    color: #05070c;
}
.clock {
    font-size: 12px;
    fill: #05070c;
}

/* Control Center */
.control-center {
    position: relative;
    display: flex;
    flex: 1;
    flex-direction: column;
    overflow: hidden;
}
.control-center > *:not(.backdrop) {
    position: relative;
}
.rule {
    flex-shrink: 0;
    width: 100%;
    height: 3px;
    margin: 0;
    border: none;
}
.rule-1 {
    background: linear-gradient(90deg, #00483a, #402838 22%, #5c0c40 42%, #520850 82%, #30006a);
}
.rule-2 {
    background: linear-gradient(90deg, #004a28, #303030 28%, #5a1030 50%, #5c0010 78%, #380060);
}
.rule-3 {
    background: linear-gradient(90deg, #5a1200, #5a2400 16%, #003a28 34%, #00305a 58%, #10085a);
}
.rule-4 {
    background: linear-gradient(90deg, #5a0c00, #403000 22%, #003038 38%, #003068 65%, #15085c);
}
.toggles-section {
    display: flex;
    flex-direction: column;
    align-items: center;
    gap: 14px;
    height: 172px;
    padding: 17px 32px 0;
}
.grabber {
    width: 72px;
    height: 21px;
}
.toggles {
    display: flex;
    justify-content: space-between;
    width: 100%;
}
.toggle {
    display: grid;
    place-items: center;
    width: 94px;
    height: 94px;
    border: 2px solid currentColor;
    border-radius: 50%;
}
.teal {
    color: #1f3e38;
}
.active {
    color: #fff;
}
.plum {
    color: #5c0045;
}
.violet {
    color: #540058;
}
.brightness {
    display: flex;
    align-items: center;
    height: 88px;
    padding: 0 57px 0 64px;
    color: #5c0838;
    --track: linear-gradient(90deg, #5c1848, #5c0028);
}
.sun-small {
    width: 30px;
    height: 30px;
    margin-right: 21px;
    color: #304a40;
}
.sun-large {
    width: 44px;
    height: 44px;
    margin-left: 14px;
}
.slider {
    appearance: none;
    flex: 1;
    min-width: 0;
    height: 30px;
    margin: 0;
    background: none;
}
.slider::-webkit-slider-runnable-track {
    height: 6px;
    border-radius: 3px;
    background: linear-gradient(#fff, #fff) left / var(--value) 100% no-repeat, var(--track);
}
.slider::-webkit-slider-thumb {
    appearance: none;
    width: 30px;
    height: 30px;
    margin-top: -12px;
    border-radius: 50%;
    background: #fff;
    box-shadow: 0 0 1px rgba(0,0,0,0.5), 0 3px 5px rgba(0,0,0,0.35);
}
.media {
    display: flex;
    flex-direction: column;
    align-items: center;
    height: 293px;
    padding-top: 29px;
}
.track {
    line-height: 38px;
    color: #fff;
}
.transport {
    display: flex;
    align-items: center;
    gap: 100px;
    margin-top: 75px;
}
.forest {
    color: #0a3430;
}
.navy {
    color: #162c46;
}
.indigo {
    color: #310f54;
}
.volume {
    display: flex;
    align-items: center;
    width: 100%;
    margin-top: 36px;
    padding: 0 56px 0 67px;
    color: #1a1450;
    --track: linear-gradient(90deg, #003c30 20%, #003050 50%, #1a1450);
}
.volume-min {
    width: 17px;
    height: 24px;
    margin-right: 28px;
    color: #5a3000;
}
.volume-max {
    width: 40px;
    height: 34px;
    margin-left: 16px;
}
.airdrop {
    display: flex;
    align-items: center;
    justify-content: center;
    gap: 14px;
    flex-shrink: 0;
    height: 88px;
    font-size: 28px;
    color: #003a68;
}
.shortcuts {
    display: flex;
    justify-content: space-between;
    padding: 32px 32px 0;
}
.shortcut {
    display: grid;
    place-items: center;
    width: 120px;
    height: 120px;
    border: 2px solid currentColor;
    border-radius: 27px;
}
.olive {
    color: #3a3c00;
}
.sea {
    color: #1c3c3c;
}
.blue {
    color: #003f74;
}
.purple {
    color: #321858;
}

/* Watermark */
.brand {
    position: absolute;
    bottom: 10px;
    left: 22px;
    font-family: Lato, "Liberation Sans", sans-serif;
    font-size: 57px;
    font-weight: 900;
    line-height: 66px;
    filter: drop-shadow(0 2px 8px rgba(40,20,0,0.7));
}
.brand span {
    background: linear-gradient(100deg, #c8c8cc, #fff 30%);
    background-clip: text;
    color: transparent;
}
.brand svg {
    position: absolute;
    top: 0;
    left: 140px;
}

/* Hand-drawn arrows */
.marks {
    position: absolute;
    inset: 0;
    z-index: 2;
    width: 100%;
    height: 100%;
    pointer-events: none;
    fill: none;
    stroke: #575757;
    stroke-width: 6;
    stroke-linecap: round;
    stroke-linejoin: round;
}
```
